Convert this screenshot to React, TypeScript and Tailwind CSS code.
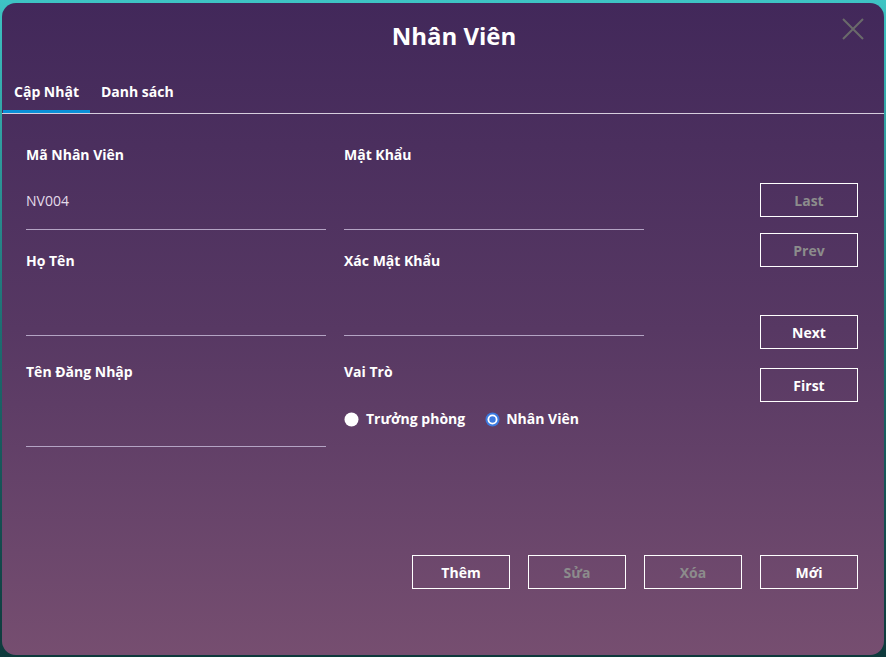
import React, { useState } from "react";

const font = { fontFamily: '"Open Sans", "Noto Sans", sans-serif' };

const Field = ({ label, value, last }: { label: string; value?: string; last?: boolean }) => (
  <div className={last ? "" : "mb-[21px]"}>
    <div className="text-[14px] leading-[20px] font-bold text-white">{label}</div>
    <div className="h-[64px] flex items-end pb-[18px] text-[14px] leading-[20px] text-[#e4dcea]">
      {value}
    </div>
    <div className="h-px bg-[#b4a4c4]" />
  </div>
);

const Btn = ({ label, disabled }: { label: string; disabled?: boolean }) => (
  <button
    className={`w-[98px] h-[34px] border border-white text-[14px] font-bold ${
      disabled ? "text-[#8c8c8c]" : "text-white"
    }`}
  >
    {label}
  </button>
);

const Radio = ({ checked }: { checked: boolean }) => (
  <svg width="15" height="15" viewBox="0 0 15 15">
    {checked ? (
      <>
        <circle cx="7.5" cy="7.5" r="7" fill="#3b7ae0" />
        <circle cx="7.5" cy="7.5" r="5" fill="#ffffff" />
        <circle cx="7.5" cy="7.5" r="3.2" fill="#3b7ae0" />
      </>
    ) : (
      <circle cx="7.5" cy="7.5" r="7" fill="#ffffff" />
    )}
  </svg>
);

export default function App() {
  const [tab, setTab] = useState(0);
  const [role, setRole] = useState(1);
  return (
    <div
      className="w-[886px] h-[657px] pt-[3px] px-[2px] pb-[2px] bg-gradient-to-b from-[#3ec4c4] via-[#1d6f72] to-[#0e3a3c]"
      style={font}
    >
      <div className="relative h-[652px] rounded-[14px] bg-gradient-to-b from-[#42285a] via-[#573863] to-[#764e70] flex flex-col">
        <div className="pt-[17px] pl-[22px] text-center text-[24px] leading-[32px] font-bold text-white">Nhân Viên</div>
        <svg className="absolute top-[15px] right-[20px]" width="22" height="22" viewBox="0 0 22 22">
          <path d="M1 1 L21 21 M21 1 L1 21" stroke="#6a6a6a" strokeWidth="2" />
        </svg>

        <div className="mt-[30px] flex pl-px">
          {["Cập Nhật", "Danh sách"].map((t, i) => (
            <div
              key={t}
              onClick={() => setTab(i)}
              className={`px-[11px] pb-[8px] text-[14px] leading-[20px] font-bold text-white cursor-pointer border-b-[3px] ${
                tab === i ? "border-[#0a90d8]" : "border-transparent"
              }`}
            >
              {t}
            </div>
          ))}
        </div>
        <div className="h-px bg-[#d6cedd]" />

        <div className="flex pl-[24px] pr-[26px] pt-[31px]">
          <div className="w-[300px]">
            <Field label="Mã Nhân Viên" value="NV004" />
            <div className="mb-[26px]">
              <div className="text-[14px] leading-[20px] font-bold text-white">Họ Tên</div>
              <div className="h-[64px]" />
              <div className="h-px bg-[#b4a4c4]" />
            </div>
            <Field label="Tên Đăng Nhập" last />
          </div>
          <div className="w-[300px] ml-[18px]">
            <Field label="Mật Khẩu" />
            <div className="mb-[26px]">
              <div className="text-[14px] leading-[20px] font-bold text-white">Xác Mật Khẩu</div>
              <div className="h-[64px]" />
              <div className="h-px bg-[#b4a4c4]" />
            </div>
            <div className="text-[14px] leading-[20px] font-bold text-white">Vai Trò</div>
            <div className="mt-[27px] flex items-center text-[14px] leading-[20px] font-bold text-white">
              <label className="flex items-center gap-[7px] cursor-pointer" onClick={() => setRole(0)}>
                <Radio checked={role === 0} />
                Trưởng phòng
              </label>
              <label className="flex items-center gap-[6px] ml-[20px] cursor-pointer" onClick={() => setRole(1)}>
                <Radio checked={role === 1} />
                Nhân Viên
              </label>
            </div>
          </div>
          <div className="ml-auto pt-[38px] flex flex-col">
            <Btn label="Last" disabled />
            <div className="mt-[16px]">
              <Btn label="Prev" disabled />
            </div>
            <div className="mt-[48px]">
              <Btn label="Next" />
            </div>
            <div className="mt-[19px]">
              <Btn label="First" />
            </div>
          </div>
        </div>

        <div className="mt-auto mb-[66px] px-[26px] flex justify-end gap-[18px]">
          <Btn label="Thêm" />
          <Btn label="Sửa" disabled />
          <Btn label="Xóa" disabled />
          <Btn label="Mới" />
        </div>
      </div>
    </div>
  );
}
